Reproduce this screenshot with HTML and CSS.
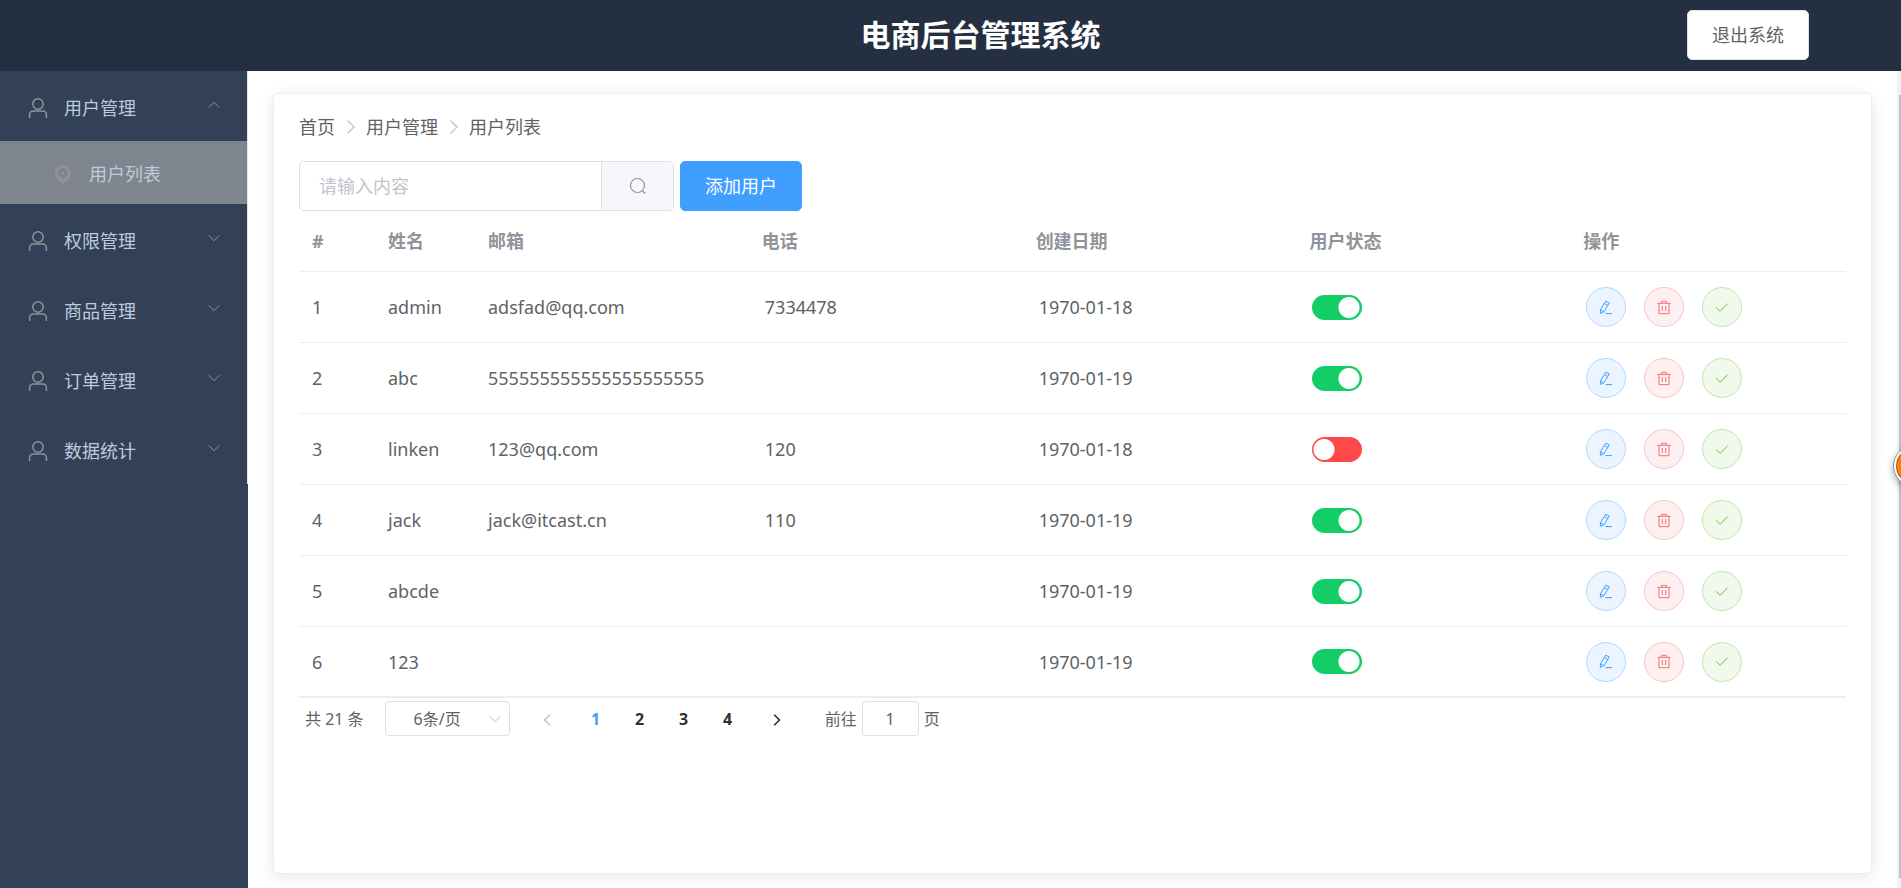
FILE: index.html
```html
<!DOCTYPE html>
<html lang="zh-CN">
<head>
<meta charset="utf-8">
<title>电商后台管理系统</title>
<link rel="stylesheet" href="styles.css">
</head>
<body>
<svg class="sprite" aria-hidden="true">
  <symbol id="user" viewBox="0 0 20 22"><circle cx="10" cy="7" r="5.2"/><path d="M1.6 21v-3.4a3.6 3.6 0 0 1 3.6-3.6h9.6a3.6 3.6 0 0 1 3.6 3.6V21"/></symbol>
  <symbol id="down" viewBox="0 0 12 12"><path d="M.7 3.3 6 8.7l5.3-5.4"/></symbol>
  <symbol id="right" viewBox="0 0 10 16"><path d="m1.5 1.5 6.5 6.5-6.5 6.5"/></symbol>
  <symbol id="search" viewBox="0 0 18 18"><circle cx="8.5" cy="8.500" r="7"/><path d="m13.500 14 2.800 2.500"/></symbol>
  <symbol id="edit" viewBox="0 0 14 15"><path d="M6.700 1.200 10.300 3 4.800 11.800 1.300 13.400 1.500 9.700zM5.500 3.600 8.900 5.500M1.500 9.700 4.800 11.800M6.500 13.600H13"/></symbol>
  <symbol id="trash" viewBox="0 0 14 15"><path d="M.5 3.300h13M2 3.300v10.400h10V3.300M4.700 3.300V1.300h4.600v2M5.300 6v5M8.700 6v5"/></symbol>
  <symbol id="check" viewBox="0 0 14 14"><path d="m1.200 6.800 3.900 4L12.800 3"/></symbol>
</svg>

<header class="header">
  <h1 class="header-title">电商后台管理系统</h1>
  <button class="btn btn-plain" type="button">退出系统</button>
</header>

<div class="body">
  <nav class="aside">
    <ul class="menu">
      <li>
        <button class="menu-title" type="button" aria-expanded="true"><svg class="menu-icon"><use href="#user"/></svg><span>用户管理</span><svg class="menu-arrow menu-arrow-open"><use href="#down"/></svg></button>
        <a class="menu-item" href="#users"><svg class="menu-pin" viewBox="0 0 16 19"><path fill-rule="evenodd" d="M8 0a8 8 0 0 1 8 8c0 4.500-4 8-8 11-4-3-8-6.500-8-11a8 8 0 0 1 8-8zm0 3a5 5 0 1 0 0 10A5 5 0 0 0 8 3z"/><circle cx="8" cy="8" r="1.500"/></svg><span>用户列表</span></a>
      </li>
      <li><button class="menu-title" type="button"><svg class="menu-icon"><use href="#user"/></svg><span>权限管理</span><svg class="menu-arrow"><use href="#down"/></svg></button></li>
      <li><button class="menu-title" type="button"><svg class="menu-icon"><use href="#user"/></svg><span>商品管理</span><svg class="menu-arrow"><use href="#down"/></svg></button></li>
      <li><button class="menu-title" type="button"><svg class="menu-icon"><use href="#user"/></svg><span>订单管理</span><svg class="menu-arrow"><use href="#down"/></svg></button></li>
      <li><button class="menu-title" type="button"><svg class="menu-icon"><use href="#user"/></svg><span>数据统计</span><svg class="menu-arrow"><use href="#down"/></svg></button></li>
    </ul>
  </nav>

  <main class="main">
    <section class="card">
      <nav class="crumbs" aria-label="面包屑">
        <a href="#home">首页</a><svg><use href="#right"/></svg><span>用户管理</span><svg><use href="#right"/></svg><span>用户列表</span>
      </nav>

      <div class="tools">
        <form class="search">
          <input type="text" placeholder="请输入内容" aria-label="搜索用户">
          <button type="button" aria-label="搜索"><svg><use href="#search"/></svg></button>
        </form>
        <button class="btn btn-primary" type="button">添加用户</button>
      </div>

      <table class="table">
        <colgroup><col class="col-index"><col class="col-name"><col class="col-wide"><col class="col-wide"><col class="col-wide"><col class="col-wide"><col></colgroup>
        <thead>
          <tr><th>#</th><th>姓名</th><th>邮箱</th><th>电话</th><th>创建日期</th><th>用户状态</th><th>操作</th></tr>
        </thead>
        <tbody id="rows"></tbody>
      </table>

      <div class="pager">
        <span class="pager-total">共 21 条</span>
        <span class="pager-size">
          <select aria-label="每页条数"><option>6条/页</option><option>12条/页</option></select>
          <svg><use href="#down"/></svg>
        </span>
        <div class="pager-pages">
          <button class="pager-prev" type="button" aria-label="上一页" disabled><svg><use href="#right"/></svg></button>
          <button class="is-current" type="button">1</button>
          <button type="button">2</button>
          <button type="button">3</button>
          <button type="button">4</button>
          <button class="pager-next" type="button" aria-label="下一页"><svg><use href="#right"/></svg></button>
        </div>
        <label class="pager-jump">前往<input type="text" value="1">页</label>
      </div>
    </section>
  </main>
  <div class="scrollbar" aria-hidden="true"><div class="scrollbar-thumb"></div></div>
</div>
<div class="float-ball" aria-hidden="true"></div>
<script src="app.js"></script>
</body>
</html>
```

FILE: styles.css
```css
* {
  box-sizing: border-box;
}

body {
  display: flex;
  flex-direction: column;
  height: 100vh;
  margin: 0;
  overflow: hidden;
  background: #fff;
  color: #606266;
  font-family: "Noto Sans", "Noto Sans CJK SC", sans-serif;
  font-size: 18px;
  line-height: 24px;
}

button,
input,
select {
  margin: 0;
  padding: 0;
  border: 0;
  background: none;
  color: inherit;
  font: inherit;
}

a {
  color: inherit;
  text-decoration: none;
}

svg {
  fill: none;
  stroke: currentColor;
}

.sprite {
  display: none;
}

/* header */
.header {
  display: grid;
  grid-template-columns: 274px 1fr 214px;
  align-items: center;
  flex: none;
  height: 71px;
  padding-bottom: 2px;
  background: #242f42;
}

.header-title {
  grid-column: 2;
  margin: 0;
  color: #fff;
  font-size: 30px;
  font-weight: 700;
  line-height: 40px;
  text-align: center;
}

.btn {
  justify-self: start;
  height: 50px;
  padding: 0 24px;
  border: 1px solid #dcdfe6;
  border-radius: 5px;
}

.btn-plain {
  background: #fff;
}

.btn-primary {
  border-color: #409eff;
  background: #409eff;
  color: #fff;
}

/* sidebar */
.body {
  display: flex;
  flex: 1;
  min-height: 0;
}

.aside {
  flex: none;
  width: 248px;
  background: #324157;
}

.menu {
  margin: 0;
  padding: 0;
  border-right: 1px solid #e6e6e6;
  list-style: none;
}

.menu-title,
.menu-item {
  display: flex;
  align-items: center;
  width: 100%;
  color: #bfcbd9;
}

.menu-title {
  height: 70px;
  padding: 3px 27px 0 28px;
}

.menu-item {
  height: 63px;
  padding: 3px 0 0 55px;
  background: #7f858e;
}

.menu-icon {
  width: 20px;
  height: 22px;
  margin-right: 16px;
  color: #909399;
  stroke-width: 1.5;
}

.menu-pin {
  width: 16px;
  height: 19px;
  margin-right: 18px;
  fill: #909399;
  stroke: none;
}

.menu-arrow {
  width: 12px;
  height: 12px;
  margin: 0 0 6px auto;
  color: #909399;
}

.menu-arrow-open {
  transform: rotate(180deg);
}

/* content */
.main {
  flex: 1;
  min-width: 0;
  padding: 22px 25px 14px;
}

.card {
  height: 100%;
  padding: 21px 25px;
  border: 1px solid #ebeef5;
  border-radius: 5px;
  background: #fff;
  box-shadow: 0 3px 15px rgba(0, 0, 0, 0.1);
}

.crumbs {
  display: flex;
  align-items: center;
}

.crumbs svg {
  width: 10px;
  height: 16px;
  margin: 0 10px 0 11px;
  color: #c0c4cc;
  stroke-width: 1.4;
}

.tools {
  display: flex;
  align-items: center;
  gap: 6px;
  margin-top: 22px;
}

.search {
  display: flex;
  width: 375px;
  height: 50px;
  border: 1px solid #dcdfe6;
  border-radius: 5px;
  overflow: hidden;
}

.search input {
  flex: 1;
  min-width: 0;
  padding: 0 19px;
  outline: 0;
}

.search input::placeholder {
  color: #c0c4cc;
}

.search button {
  display: flex;
  align-items: center;
  justify-content: center;
  width: 72px;
  border-left: 1px solid #dcdfe6;
  background: #f5f7fa;
  color: #909399;
}

.search svg {
  width: 18px;
  height: 18px;
  stroke-width: 1.2;
}

.table {
  width: 100%;
  border-bottom: 1px solid #ebeef5;
  border-collapse: separate;
  border-spacing: 0;
  table-layout: fixed;
}

.col-index {
  width: 76px;
}

.col-name {
  width: 100px;
}

.col-wide {
  width: 17.7%;
}

.table th,
.table td {
  height: 71px;
  padding: 0 0 0 16px;
  border-bottom: 1px solid #ebeef5;
  text-align: left;
}

.table th {
  height: 61px;
  padding-left: 13px;
  color: #909399;
  font-weight: 700;
}

.table td:nth-child(-n + 3) {
  padding-left: 13px;
}

.table tr:last-child td {
  height: 70px;
}

.switch {
  display: block;
  width: 50px;
  height: 25px;
  border-radius: 13px;
  appearance: none;
  background: radial-gradient(circle at 12px 50%, #fff 10px, transparent 11px) #ff4949;
}

.switch:checked {
  background: radial-gradient(circle at 37px 50%, #fff 10px, transparent 11px) #13ce66;
}

.actions {
  display: flex;
  gap: 18px;
}

.round {
  display: flex;
  align-items: center;
  justify-content: center;
  width: 40px;
  height: 40px;
  border: 1px solid;
  border-radius: 50%;
}

.round svg {
  width: 14px;
  height: 15px;
}

.round-edit {
  border-color: #b3d8ff;
  background: #ecf5ff;
  color: #409eff;
}

.round-delete {
  border-color: #fbc4c4;
  background: #fef0f0;
  color: #f56c6c;
}

.round-check {
  border-color: #c2e7b0;
  background: #f0f9eb;
  color: #67c23a;
}

/* pagination */
.pager {
  display: flex;
  align-items: center;
  padding: 3px 6px;
  font-size: 16px;
}

.pager-size {
  position: relative;
  width: 125px;
  margin-left: 21px;
}

.pager-size select {
  display: block;
  width: 100%;
  height: 35px;
  padding: 0 20px 0 0;
  border: 1px solid #dcdfe6;
  border-radius: 4px;
  appearance: none;
  text-align: center;
  text-align-last: center;
}

.pager-size svg {
  position: absolute;
  top: 12px;
  right: 9px;
  width: 12px;
  height: 12px;
  color: #c0c4cc;
  pointer-events: none;
}

.pager-pages {
  display: flex;
  margin-left: 15px;
}

.pager-pages button {
  width: 44px;
  height: 35px;
  color: #303133;
  font-weight: 700;
}

.pager-pages .is-current {
  color: #409eff;
}

.pager-pages svg {
  width: 8px;
  height: 14px;
  stroke-width: 2;
  vertical-align: middle;
}

.pager-pages .pager-prev {
  margin-right: 5px;
  color: #c0c4cc;
}

.pager-prev svg {
  transform: rotate(180deg);
}

.pager-pages .pager-next {
  margin-left: 5px;
}

.pager-jump {
  display: flex;
  align-items: center;
  gap: 5px;
  margin-left: 26px;
}

.pager-jump input {
  width: 57px;
  height: 35px;
  border: 1px solid #dcdfe6;
  border-radius: 4px;
  text-align: center;
}

/* scroll indicator and floating ball at the window edge */
.scrollbar {
  flex: none;
  width: 4px;
  padding: 24px 0 10px 2px;
  background: #f1f1f1;
}

.scrollbar-thumb {
  height: 100%;
  background: #c1c1c1;
}

.float-ball {
  position: fixed;
  top: 446px;
  right: -33px;
  width: 40px;
  height: 40px;
  border: 2px solid #fff;
  border-radius: 50%;
  outline: 1px solid #999;
  background: #ff7f0e;
  box-shadow: inset 0 0 0 1px #a8500c, 0 3px 8px rgba(0, 0, 0, 0.4);
}
```

FILE: app.js
```js
const users = [
  ["admin", "adsfad@qq.com", "7334478", "1970-01-18", true],
  ["abc", "555555555555555555555", "", "1970-01-19", true],
  ["linken", "123@qq.com", "120", "1970-01-18", false],
  ["jack", "jack@itcast.cn", "110", "1970-01-19", true],
  ["abcde", "", "", "1970-01-19", true],
  ["123", "", "", "1970-01-19", true]
];

const actions = [
  ["edit", "编辑", "edit"],
  ["delete", "删除", "trash"],
  ["check", "分配角色", "check"]
];

const buttons = actions.map(([kind, label, icon]) =>
  `<button class="round round-${kind}" type="button" aria-label="${label}"><svg><use href="#${icon}"/></svg></button>`
).join("");

document.getElementById("rows").innerHTML = users.map(([name, mail, phone, date, on], i) => `
  <tr>
    <td>${i + 1}</td><td>${name}</td><td>${mail}</td><td>${phone}</td><td>${date}</td>
    <td><input class="switch" type="checkbox" role="switch" aria-label="${name} 状态"${on ? " checked" : ""}></td>
    <td><div class="actions">${buttons}</div></td>
  </tr>`).join("");
```
